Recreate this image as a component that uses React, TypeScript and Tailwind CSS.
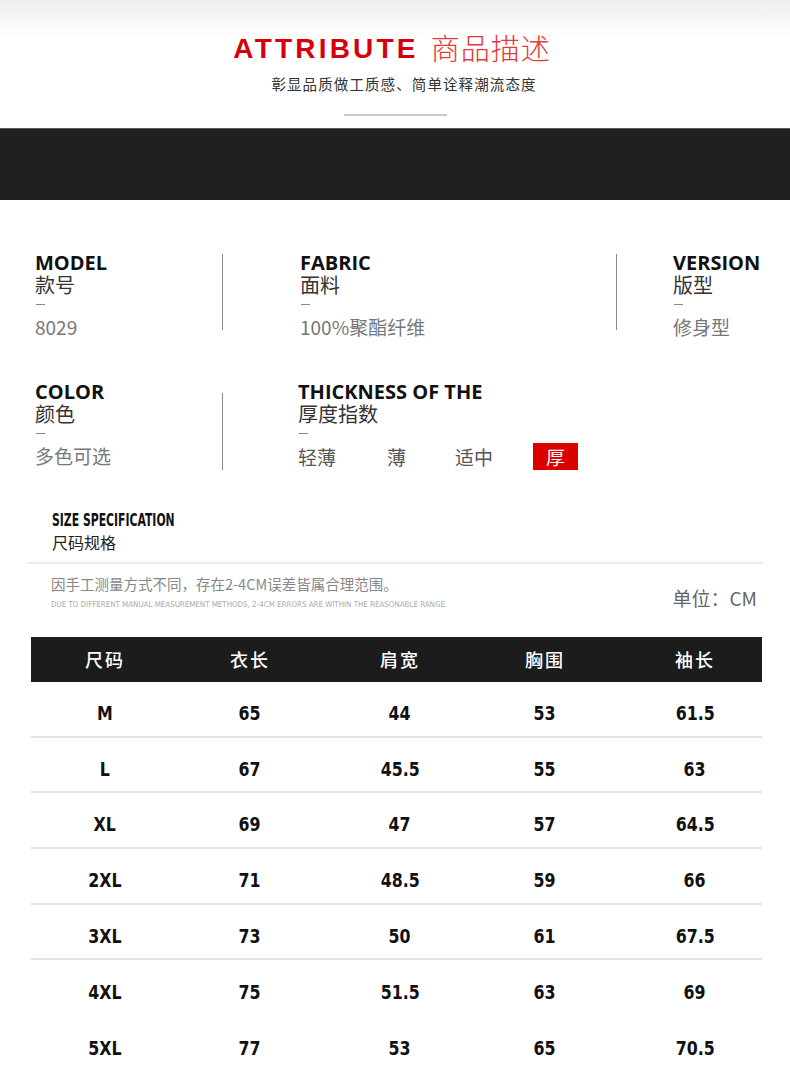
const cjk = "font-['Noto_Sans_CJK_SC',sans-serif]";
const label = "font-['Open_Sans','Noto_Sans_CJK_SC',sans-serif] font-bold text-[20px] leading-[22px] text-[#111]";
const cond = "font-['DejaVu_Sans_Condensed','DejaVu_Sans',sans-serif]";

const rows = [
  ['M', '65', '44', '53', '61.5'],
  ['L', '67', '45.5', '55', '63'],
  ['XL', '69', '47', '57', '64.5'],
  ['2XL', '71', '48.5', '59', '66'],
  ['3XL', '73', '50', '61', '67.5'],
  ['4XL', '75', '51.5', '63', '69'],
  ['5XL', '77', '53', '65', '70.5'],
];

const cols = "grid grid-cols-[148px_142px_158px_132px_1fr]";

function Attr({ en, zh, children }: { en: string; zh: string; children: React.ReactNode }) {
  return (
    <div className="flex flex-col">
      <div className={label}>{en}</div>
      <div className={`${cjk} text-[20px] leading-[22px] text-[#333]`}>{zh}</div>
      <div className="w-[9px] h-px bg-[#888] mt-[8px] ml-[1px]"></div>
      <div className={`${cjk} text-[19px] leading-[24px] text-[#777] mt-[10px]`}>{children}</div>
    </div>
  );
}

export default function App() {
  return (
    <div className="w-[790px] h-[1081px] overflow-hidden bg-white relative">
      <div className="bg-gradient-to-b from-[#efefef] to-white h-[40px] absolute top-0 left-0 right-0"></div>

      <div className="relative flex flex-col items-center pt-[28px]">
        <div className="flex items-end gap-[12px] pr-[6px]">
          <span className="font-['Liberation_Sans',sans-serif] font-bold text-[28px] leading-[34px] tracking-[3.2px] text-[#d5000c]">ATTRIBUTE</span>
          <span className={`${cjk} font-light text-[29px] leading-[38px] tracking-[1px] text-[#e23a3a]`}>商品描述</span>
        </div>
        <div className={`${cjk} text-[14.5px] leading-[20px] tracking-[1.1px] text-[#333] mt-[8px] pl-[18px]`}>彰显品质做工质感、简单诠释潮流态度</div>
        <div className="w-[103px] h-[2px] bg-[#c9c9c9] mt-[20px]"></div>
      </div>

      <div className="mt-[12px] h-[72px] bg-[#202020] border-t border-[#5a5a5a]"></div>

      <div className="pl-[35px] pt-[52px] flex">
        <div className="w-[187px]">
          <Attr en="MODEL" zh="款号">8029</Attr>
        </div>
        <div className="w-px h-[76px] bg-[#8a8a8a] mt-[2px]"></div>
        <div className="w-[393px] pl-[77px]">
          <Attr en="FABRIC" zh="面料">100%聚酯纤维</Attr>
        </div>
        <div className="w-px h-[76px] bg-[#8a8a8a] mt-[2px]"></div>
        <div className="pl-[56px]">
          <Attr en="VERSION" zh="版型">修身型</Attr>
        </div>
      </div>

      <div className="pl-[35px] pt-[42px] flex">
        <div className="w-[187px]">
          <Attr en="COLOR" zh="颜色">多色可选</Attr>
        </div>
        <div className="w-px h-[77px] bg-[#8a8a8a] mt-[12px]"></div>
        <div className="pl-[75px] flex flex-col">
          <div className={label}>THICKNESS OF THE</div>
          <div className={`${cjk} text-[20px] leading-[22px] text-[#333]`}>厚度指数</div>
          <div className="w-[9px] h-px bg-[#888] mt-[8px] ml-[1px]"></div>
          <div className={`${cjk} text-[19px] leading-[27px] text-[#555] mt-[9px] flex items-center`}>
            <span className="w-[89px]">轻薄</span>
            <span className="w-[68px]">薄</span>
            <span className="w-[78px]">适中</span>
            <span className="w-[45px] h-[27px] bg-[#da0000] text-white text-center">厚</span>
          </div>
        </div>
      </div>

      <div className="pl-[52px] pt-[40px]">
        <div className={`${cond} font-bold text-[18px] leading-[20px] text-[#111] origin-left scale-x-[0.67] whitespace-nowrap`}>SIZE SPECIFICATION</div>
        <div className={`${cjk} text-[16px] leading-[20px] text-[#222] mt-[2px]`}>尺码规格</div>
      </div>

      <div className="mx-[27px] h-[2px] bg-[#ececec] mt-[10px]"></div>

      <div className="flex items-start justify-between pl-[51px] pr-[33px] pt-[10px]">
        <div className="flex flex-col">
          <div className={`${cjk} text-[14.5px] leading-[20px] text-[#888]`}>因手工测量方式不同，存在2-4CM误差皆属合理范围。</div>
          <div className={`${cond} text-[7.9px] leading-[10px] text-[#aaa] mt-[6px] whitespace-nowrap`}>DUE TO DIFFERENT MANUAL MEASUREMENT METHODS, 2-4CM ERRORS ARE WITHIN THE REASONABLE RANGE.</div>
        </div>
        <div className={`${cjk} text-[19px] leading-[24px] text-[#666] mt-[12px]`}>单位：CM</div>
      </div>

      <div className="mx-[31px] w-[731px] mt-[27px]">
        <div className={`${cols} h-[45px] bg-[#1c1c1c] items-center text-white ${cjk} font-medium text-[18px] tracking-[2px]`}>
          <div className="text-center">尺码</div>
          <div className="text-center">衣长</div>
          <div className="text-center">肩宽</div>
          <div className="text-center">胸围</div>
          <div className="text-center pl-[17px]">袖长</div>
        </div>
        {rows.map((r, i) => (
          <div
            key={r[0]}
            className={`${cols} h-[55.7px] items-center pt-[8px] ${cond} font-bold text-[20px] text-[#111] ${i < 5 ? 'border-b-2 border-[#e3e3e3]' : ''}`}
          >
            {r.map((c, j) => (
              <div key={j} className={`text-center ${j === 4 ? 'pl-[17px]' : ''}`}>
                <span className="inline-block scale-x-[0.88]">{c}</span>
              </div>
            ))}
          </div>
        ))}
      </div>
    </div>
  );
}
